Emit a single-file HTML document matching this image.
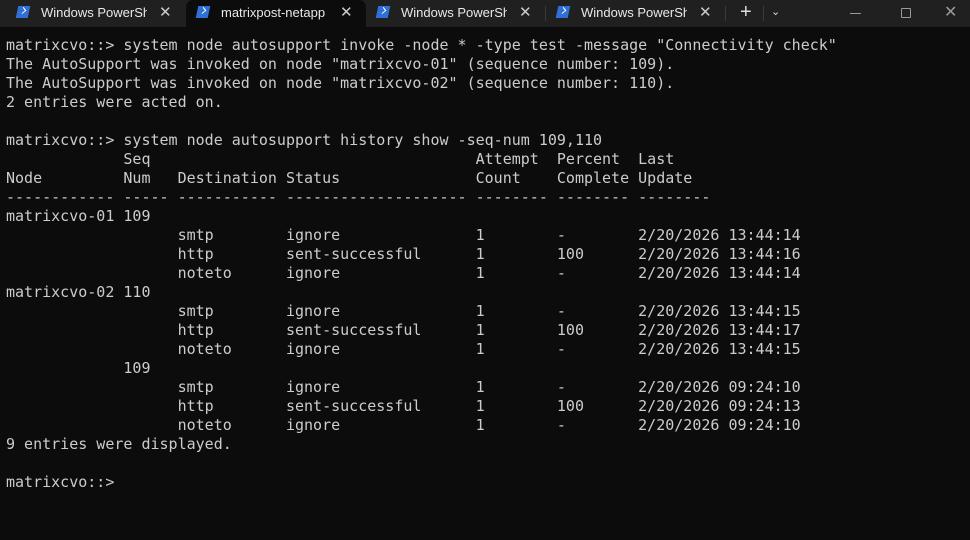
<!DOCTYPE html>
<html><head><meta charset="utf-8"><style>
body{margin:0;width:970px;height:540px;background:#0c0c0c;overflow:hidden;font-family:"Liberation Sans",sans-serif}
.bar{position:absolute;left:0;top:0;width:970px;height:27px;background:#202020}
.tab{position:absolute;top:0;height:27px;color:#e8e8e8;font-size:13px;line-height:25px}
.tab.active{background:#0c0c0c;border-radius:7px 7px 0 0}
.ico{position:absolute;top:6px;width:12px;height:12px;background:#2f6fd6;transform:skewX(-12deg)}
.ico:after{content:"";position:absolute;left:3px;top:2px;width:4px;height:4px;border-right:1.5px solid #fff;border-bottom:1.5px solid #fff;transform:rotate(-45deg)}
.lbl{position:absolute;top:0;left:40px;white-space:nowrap;overflow:hidden;width:106px}
.x{position:absolute;top:0;font-size:15px;color:#ccc}
.sep{position:absolute;top:6px;width:1px;height:15px;background:#3a3a3a}
pre{position:absolute;left:6px;top:36px;margin:0;font-family:"DejaVu Sans Mono","Liberation Mono",monospace;font-size:15px;line-height:19px;color:#cccccc}
</style></head><body>
<div class="bar"></div>
<div class="tab" style="left:0;width:186px"><div class="ico" style="left:17px"></div><div class="lbl" style="left:41px">Windows PowerShell</div><div class="x" style="left:159px">✕</div></div>
<div class="tab active" style="left:186px;width:180px"><div class="ico" style="left:11px"></div><div class="lbl" style="left:35px;width:120px">matrixpost-netapp</div><div class="x" style="left:154px">✕</div></div>
<div class="tab" style="left:366px;width:180px"><div class="ico" style="left:11px"></div><div class="lbl" style="left:35px">Windows PowerShell</div><div class="x" style="left:153px">✕</div></div>
<div class="sep" style="left:545px"></div>
<div class="tab" style="left:546px;width:180px"><div class="ico" style="left:11px"></div><div class="lbl" style="left:35px">Windows PowerShell</div><div class="x" style="left:153px">✕</div></div>
<div class="sep" style="left:725px"></div>
<div class="tab" style="left:740px;font-size:20px;color:#ddd">+</div>
<div class="sep" style="left:763px"></div>
<div class="tab" style="left:771px;font-size:11px;color:#ddd">⌄</div>
<div style="position:absolute;left:850px;top:13px;width:11px;height:1px;background:#999"></div>
<div style="position:absolute;left:901px;top:8px;width:8px;height:8px;border:1px solid #999;border-radius:1px"></div>
<div class="tab" style="left:944px;color:#999;font-size:16px">✕</div>
<pre>matrixcvo::&gt; system node autosupport invoke -node * -type test -message "Connectivity check"
The AutoSupport was invoked on node "matrixcvo-01" (sequence number: 109).
The AutoSupport was invoked on node "matrixcvo-02" (sequence number: 110).
2 entries were acted on.

matrixcvo::&gt; system node autosupport history show -seq-num 109,110
             Seq                                    Attempt  Percent  Last
Node         Num   Destination Status               Count    Complete Update
------------ ----- ----------- -------------------- -------- -------- --------
matrixcvo-01 109
                   smtp        ignore               1        -        2/20/2026 13:44:14
                   http        sent-successful      1        100      2/20/2026 13:44:16
                   noteto      ignore               1        -        2/20/2026 13:44:14
matrixcvo-02 110
                   smtp        ignore               1        -        2/20/2026 13:44:15
                   http        sent-successful      1        100      2/20/2026 13:44:17
                   noteto      ignore               1        -        2/20/2026 13:44:15
             109
                   smtp        ignore               1        -        2/20/2026 09:24:10
                   http        sent-successful      1        100      2/20/2026 09:24:13
                   noteto      ignore               1        -        2/20/2026 09:24:10
9 entries were displayed.

matrixcvo::&gt; </pre>
</body></html>
